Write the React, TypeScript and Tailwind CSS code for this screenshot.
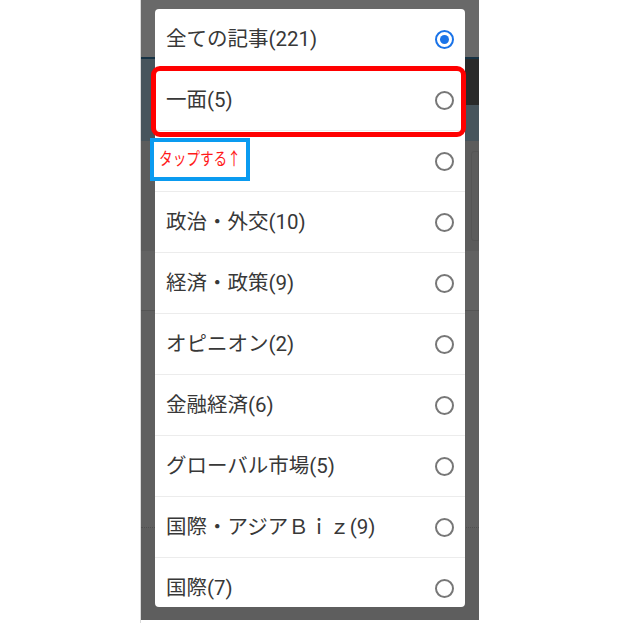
import React from 'react';

const items = [
  { label: '全ての記事(221)', selected: true },
  { label: '一面(5)' },
  { label: '' },
  { label: '政治・外交(10)' },
  { label: '経済・政策(9)' },
  { label: 'オピニオン(2)' },
  { label: '金融経済(6)' },
  { label: 'グローバル市場(5)' },
  { label: '国際・アジアＢｉｚ(9)' },
  { label: '国際(7)' },
];

function Radio({ selected }: { selected?: boolean }) {
  if (selected) {
    return (
      <div className="w-[19px] h-[19px] rounded-full border-2 border-[#1a73e8] flex items-center justify-center">
        <div className="w-[9px] h-[9px] rounded-full bg-[#1a73e8]" />
      </div>
    );
  }
  return <div className="w-[19px] h-[19px] rounded-full border-2 border-[#777777]" />;
}

export default function App() {
  return (
    <div className="w-[623px] h-[623px] bg-white flex" style={{ fontFamily: 'Roboto, "Noto Sans CJK JP", sans-serif' }}>
      <div className="w-[141px] border-r border-[#d9d9d9]" />
      <div className="relative w-[338px] h-[620px] flex flex-col bg-[#5e5e5e] overflow-hidden">
        {/* dimmed app behind */}
        <div className="h-[57px] bg-[#696969]" />
        <div className="h-[2px] bg-[#163244]" />
        <div className="h-[82px] flex bg-[#47545c]">
          <div className="flex-1" />
          <div className="w-[14px] h-[46px] bg-[#2a2a2a]" />
        </div>
        <div className="h-[110px] bg-[#5c5c5c] flex justify-end pt-[10px]">
          <div className="w-[8px] h-[90px] border border-[#555] rounded-l-[3px]" />
        </div>
        <div className="h-[60px] bg-[#626262] border-b border-[#555]" />
        <div className="h-[217px] bg-[#606060] border-b border-dotted border-[#4f4f4f]" />
        <div className="flex-1 bg-[#5e5e5e]" />

        {/* dialog */}
        <div className="absolute left-[14px] top-[9px] w-[310px] h-[598px] bg-white rounded-[4px] overflow-hidden">
          {items.map((it, i) => (
            <div
              key={i}
              className="h-[61px] flex items-center justify-between pl-[11px] pr-[11px] border-b border-[#ececec] text-[20.5px] text-[#383838]"
            >
              <span>{it.label}</span>
              <Radio selected={it.selected} />
            </div>
          ))}
        </div>

        {/* annotations */}
        <div className="absolute left-[10px] top-[66px] w-[315px] h-[71px] border-[5px] border-[#ff0000] rounded-[9px]" />
        <div className="absolute left-[9px] top-[138px] w-[100px] h-[43px] border-[4px] border-[#0a9bf0] bg-white flex items-center pl-[5px]">
          <span className="text-[17.5px] leading-none text-[#ff1a1a] scale-x-[0.78] origin-left whitespace-nowrap">タップする↑</span>
        </div>
      </div>
    </div>
  );
}
